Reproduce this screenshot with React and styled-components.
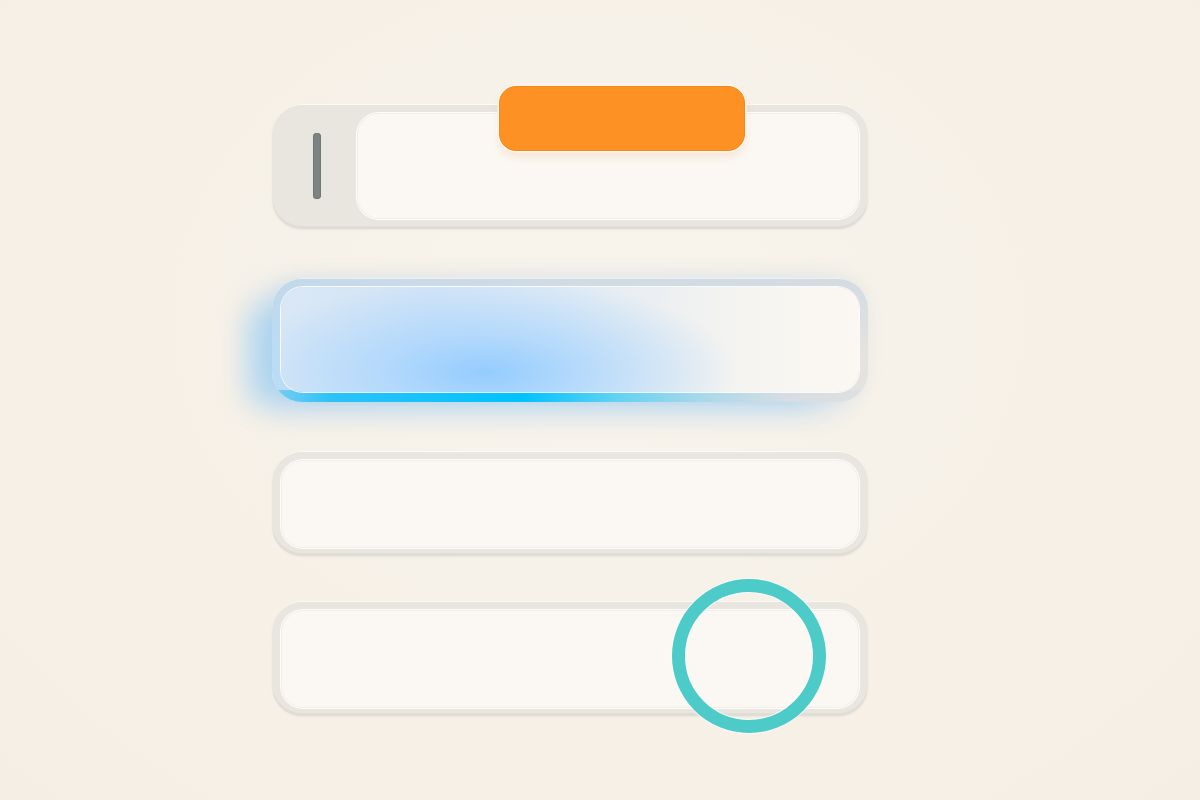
import React from 'react'
import styled, { createGlobalStyle } from 'styled-components'

const GlobalStyle = createGlobalStyle`
  html, body {
    margin: 0;
    padding: 0;
    background: #f7f1e8;
    font-family: 'Inter', 'Liberation Sans', sans-serif;
  }
`

const Page = styled.div`
  width: 1200px;
  height: 800px;
  box-sizing: border-box;
  padding: 104px 0 0 272px;
  background: radial-gradient(ellipse at 50% 40%, #f8f4ec 0%, #f6f0e6 70%, #f4eee4 100%);
  overflow: hidden;
`

const Stack = styled.div`
  width: 596px;
  display: flex;
  flex-direction: column;
  gap: ${(p) => p.$gap || 49}px;
`

const Frame = styled.div`
  position: relative;
  display: flex;
  box-sizing: border-box;
  padding: 9px 9px ${(p) => p.$bottom || 10}px;
  border-radius: 30px;
  background: #e9e5df;
  box-shadow: inset 0 1px 0 rgba(255, 255, 255, 0.8), inset 0 -3px 0 rgba(0, 0, 0, 0.035),
    0 1px 2px rgba(120, 110, 95, 0.08);
`

// the focused row: blue underline on the frame, soft blue glow to the lower left
const GlowFrame = styled(Frame)`
  background: linear-gradient(
        90deg,
        #7ccdf2 0%,
        #2cc2f8 10%,
        #00c2fc 42%,
        #64d2f3 58%,
        #a9d8ea 72%,
        #d6dde2 86%,
        #dfe0e0 100%
      )
      bottom / 100% 12px no-repeat,
    linear-gradient(180deg, rgba(200, 214, 226, 0.6) 0%, rgba(200, 214, 226, 0) 60%),
    linear-gradient(90deg, #b9dcf4 0%, #cddff0 20%, #d9e1e8 45%, #e0e2e3 75%, #e4e3e0 100%);
  box-shadow: inset 0 1px 0 rgba(255, 255, 255, 0.6), -18px 10px 30px rgba(110, 180, 250, 0.28),
    -40px 16px 28px -14px rgba(60, 180, 250, 0.25), 0 -4px 18px rgba(150, 180, 205, 0.1);
`

const Handle = styled.div`
  width: 76px;
  display: flex;
  align-items: center;
  justify-content: center;
  padding-right: 4px;
  box-sizing: border-box;
`

const Grip = styled.div`
  width: 8px;
  height: 66px;
  border-radius: 4px;
  background: #7b8483;
  box-shadow: inset 0 0 0 1px #6f7877;
`

const Field = styled.div`
  flex: 1;
  height: ${(p) => p.$h}px;
  border-radius: 22px;
  background: #fbf8f3;
  box-shadow: 0 0 0 1px rgba(255, 255, 255, 0.9), inset 0 0 0 1px #f1ede7;
`

const GlowField = styled(Field)`
  background: radial-gradient(
      ellipse 250px 95px at 205px 85px,
      rgba(145, 203, 255, 0.95) 0%,
      rgba(160, 210, 255, 0.65) 40%,
      rgba(190, 222, 250, 0) 100%
    ),
    linear-gradient(90deg, #d9e7f5 0%, #d5e5f6 25%, #e2ebf4 50%, #eef0f1 68%, #f7f5f1 85%, #fbf8f3 100%);
  box-shadow: 0 0 0 1px rgba(255, 255, 255, 0.85);
`

const Tag = styled.div`
  position: absolute;
  left: 227px;
  top: -18px;
  width: 246px;
  height: 65px;
  box-sizing: border-box;
  border-radius: 17px;
  background: #fd9124;
  border: 1px solid #f88718;
  box-shadow: 0 0 0 1.5px #fff8f0, 0 6px 10px rgba(230, 150, 90, 0.18);
`

const Ring = styled.div`
  position: absolute;
  left: 400px;
  top: -22px;
  width: 154px;
  height: 154px;
  box-sizing: border-box;
  border-radius: 50%;
  border: 13px solid #4ccbc8;
  box-shadow: 0 0 0 1px rgba(255, 255, 255, 0.7), inset 0 0 0 1px rgba(255, 255, 255, 0.7);
`

export default function App() {
  return (
    <>
      <GlobalStyle />
      <Page>
        <Stack>
          <Frame>
            <Handle>
              <Grip />
            </Handle>
            <Field $h={106} />
            <Tag />
          </Frame>
          <GlowFrame>
            <GlowField $h={105} />
          </GlowFrame>
          <Stack $gap={45}>
            <Frame $bottom={8}>
              <Field $h={88} />
            </Frame>
            <Frame $bottom={8}>
              <Field $h={98} />
              <Ring />
            </Frame>
          </Stack>
        </Stack>
      </Page>
    </>
  )
}
